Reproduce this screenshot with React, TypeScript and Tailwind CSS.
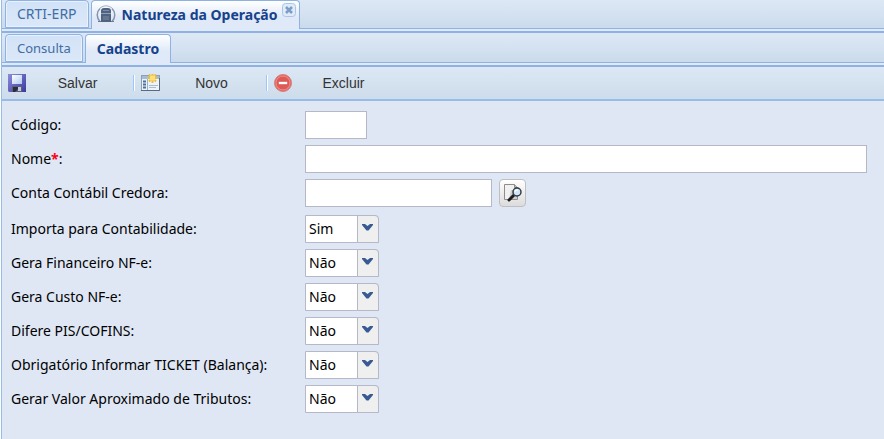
import { useState, type ReactNode } from "react";

const OPTIONS = ["Sim", "Não"];

const SELECT_FIELDS = [
    { id: "contabilidade", label: "Importa para Contabilidade:", value: "Sim" },
    { id: "financeiro", label: "Gera Financeiro NF-e:", value: "Não" },
    { id: "custo", label: "Gera Custo NF-e:", value: "Não" },
    { id: "pisCofins", label: "Difere PIS/COFINS:", value: "Não" },
    { id: "ticket", label: "Obrigatório Informar TICKET (Balança):", value: "Não" },
    { id: "tributos", label: "Gerar Valor Aproximado de Tributos:", value: "Não" },
];

const ModuleIcon = () => (
    <svg className="h-5 w-5 shrink-0" viewBox="0 0 20 20" fill="none">
        <path d="M4 16.5A9 9 0 0 1 4 3.5" stroke="#8494ac" strokeWidth="1.5" />
        <path d="M16 16.5a9 9 0 0 0 0-13" stroke="#8494ac" strokeWidth="1.5" />
        <path d="M4 3Q10-1.5 16 3" stroke="#a5b3c8" />
        <path d="M5 6Q5 3 8 3h4q3 0 3 3v11H5z" fill="#4f627f" />
        <path d="M7 5.5h6" stroke="#7c8da8" />
        <path d="M5 8.5h10" stroke="#8fa0b8" />
        <rect x="7" y="11" width="6" height="4" fill="#66768f" />
        <path d="M2 16.5h3M15 16.500h3" stroke="#6b7c97" />
    </svg>
);

const SaveIcon = () => (
    <svg className="h-[18px] w-[18px] shrink-0" viewBox="0 0 18 18">
        <defs>
            <linearGradient id="disk" x1="0" y1="0" x2="1" y2="1">
                <stop offset="0" stopColor="#8c8cdc" />
                <stop offset="1" stopColor="#3b3a9b" />
            </linearGradient>
            <linearGradient id="diskLabel" x1="0" y1="0" x2="1" y2="1">
                <stop offset="0" stopColor="#ffffff" />
                <stop offset="1" stopColor="#b0c9f2" />
            </linearGradient>
        </defs>
        <path d="M0 0h18v18H1l-1-1z" fill="url(#disk)" />
        <rect x="4" y="1" width="10" height="9" fill="url(#diskLabel)" />
        <rect x="4" y="12" width="10" height="6" fill="#5d5d7c" />
        <path d="M5 13h5v2l-3 3H5z" fill="#2a2a42" />
        <rect x="10" y="13" width="3" height="4" fill="#c3cae0" />
    </svg>
);

const NewIcon = () => (
    <svg className="h-[18px] w-5 shrink-0" viewBox="0 0 20 18">
        <rect x="0.5" y="1.5" width="18" height="15" fill="#edf3f9" stroke="#8ba0b5" />
        <path d="M18.5 4v12.5H0" fill="none" stroke="#566b80" />
        <rect x="1" y="2" width="17" height="3" fill="#a5bed8" />
        <path d="M2 7.500h3M2 10.500h3M2 13.500h3" stroke="#4d7099" strokeWidth="2" />
        <path d="M6.5 5v11" stroke="#9ab0c6" />
        <path d="M8 11.500h9M8 13.500h7" stroke="#a9bccf" />
        <path
            d="M11.5 -1v10M6.500 4h10M8 0.500l7 7M15 0.500l-7 7"
            stroke="#e8bd45"
            strokeWidth="2"
        />
        <rect x="9" y="1.500" width="5" height="5" fill="#ffe070" />
    </svg>
);

const DeleteIcon = () => (
    <svg className="h-[18px] w-[18px] shrink-0" viewBox="0 0 18 18">
        <circle cx="9" cy="9" r="8.5" fill="#e2605b" stroke="#d2817f" />
        <circle cx="9" cy="9" r="7" fill="#e05a55" stroke="#f08f89" />
        <rect x="4.5" y="7.5" width="9" height="3" rx="1" fill="#fff" stroke="#c94642" strokeWidth="0.5" />
    </svg>
);

const LookupIcon = () => (
    <svg className="h-5 w-5" viewBox="0 0 20 20" fill="none">
        <path d="M1.5 1.5h10l3 3v12h-13z" fill="#f1f1f1" stroke="#8d8d8d" />
        <path d="M11.5 1.5v3h3" fill="#bbb" stroke="#8d8d8d" />
        <path d="M8 7h6v9H6z" fill="#cfcfcf" />
        <path d="M11 12l-5 5" stroke="#1d1d1d" strokeWidth="3" strokeLinecap="round" />
        <circle cx="14" cy="9" r="4" fill="#cfe7fa" stroke="#333b42" strokeWidth="1.5" />
        <path d="M12 8.5q1-2 3-1.500" stroke="#fff" strokeWidth="1.5" />
    </svg>
);

const CloseIcon = () => (
    <svg className="h-3.5 w-3.5" viewBox="0 0 14 14">
        <rect x="0.5" y="0.5" width="13" height="13" rx="3" fill="#e0ebf8" stroke="#abc5e8" />
        <path d="M4 4l6 6M10 4l-6 6" stroke="#7a9cc7" strokeWidth="2.5" />
    </svg>
);

const TAB = "flex items-center rounded-t border border-[#8db2e3] leading-5";
const TAB_IDLE =
    "h-7 bg-linear-to-b from-[#d2e2f6] to-[#dbe8f9] px-[11px] text-[#416da3] inset-ring inset-ring-[#e8f1fc]";
const TAB_ACTIVE =
    "-mb-px h-[29px] border-b-0 bg-linear-to-b from-white to-[#dfe9f8] to-60% font-bold text-[#15428b]";

const TabStrip = ({ children }: { children: ReactNode }) => (
    <div className="border-b-2 border-[#8db2e3] bg-[#dfe9f8] pb-0.5">
        <div
            role="tablist"
            className="flex h-[29px] items-end gap-[2px] border-b border-[#8db2e3] bg-linear-to-b from-[#dde8f5] to-[#cbdbec] pl-[3px]"
        >
            {children}
        </div>
    </div>
);

type ToolButtonProps = { icon: ReactNode; label: string };

const ToolButton = ({ icon, label }: ToolButtonProps) => (
    <button
        type="button"
        className="flex h-6 w-[125px] items-center font-['Liberation_Sans',Arial,sans-serif] text-[14px] leading-5 text-[#333]"
    >
        {icon}
        <span className="flex-1 pr-1 text-center">{label}</span>
    </button>
);

const Separator = () => <span className="mr-1.5 h-4 w-0.5 border-l border-[#98c8ff] bg-white" />;

const FIELD = "h-7 min-w-0 border border-[#b5b8c8] bg-white px-[3px] outline-none focus:border-[#7eadd9]";

type RowProps = { id: string; label: ReactNode; children: ReactNode };

const Row = ({ id, label, children }: RowProps) => (
    <div className="flex items-center">
        <label htmlFor={id} className="w-[294px] shrink-0">
            {label}
        </label>
        {children}
    </div>
);

export default function App() {
    const [values, setValues] = useState<Record<string, string>>(
        Object.fromEntries(SELECT_FIELDS.map((f) => [f.id, f.value]))
    );

    return (
        <div className="ml-px min-h-screen border-l border-[#99bbe8] bg-[#dfe7f5] font-['Noto_Sans',Tahoma,sans-serif] text-[14px] leading-5 text-black">
            <TabStrip>
                <button type="button" role="tab" aria-selected={false} className={`${TAB} ${TAB_IDLE}`}>
                    CRTI-ERP
                </button>
                <div className={`${TAB} ${TAB_ACTIVE} pr-[3px] pl-1`}>
                    <button type="button" role="tab" aria-selected className="flex items-center gap-1.5">
                        <ModuleIcon />
                        Natureza da Operação
                    </button>
                    <button type="button" aria-label="Fechar" className="mt-0.5 ml-1 self-start">
                        <CloseIcon />
                    </button>
                </div>
            </TabStrip>

            <div className="pt-px">
                <TabStrip>
                    <button
                        type="button"
                        role="tab"
                        aria-selected={false}
                        className={`${TAB} ${TAB_IDLE} text-[13px]`}
                    >
                        Consulta
                    </button>
                    <button
                        type="button"
                        role="tab"
                        aria-selected
                        className={`${TAB} ${TAB_ACTIVE} px-[11px]`}
                    >
                        Cadastro
                    </button>
                </TabStrip>
            </div>

            <div
                role="toolbar"
                className="flex h-[34px] items-center border-b-2 border-[#99bbe8] bg-linear-to-b from-[#dce8f4] to-[#cddceb] pl-1.5"
            >
                <ToolButton icon={<SaveIcon />} label="Salvar" />
                <Separator />
                <ToolButton icon={<NewIcon />} label="Novo" />
                <Separator />
                <ToolButton icon={<DeleteIcon />} label="Excluir" />
            </div>

            <form className="flex flex-col gap-2 pt-2.5 pr-[17px] pl-[9px]" onSubmit={(e) => e.preventDefault()}>
                <div className="flex flex-col gap-1.5">
                    <Row id="codigo" label="Código:">
                        <input id="codigo" type="text" className={`${FIELD} w-[62px]`} />
                    </Row>
                    <Row
                        id="nome"
                        label={
                            <>
                                Nome<span className="font-bold text-[#ff0018]">*</span>:
                            </>
                        }
                    >
                        <input id="nome" type="text" required className={`${FIELD} flex-1`} />
                    </Row>
                    <Row id="conta" label="Conta Contábil Credora:">
                        <input id="conta" type="text" className={`${FIELD} w-[187px]`} />
                        <button
                            type="button"
                            aria-label="Pesquisar conta"
                            className="ml-[7px] flex h-7 w-[27px] items-center justify-center rounded border border-[#bfbfbf] bg-linear-to-b from-white to-[#dcdcdc]"
                        >
                            <LookupIcon />
                        </button>
                    </Row>
                </div>

                <div className="flex flex-col gap-1.5">
                    {SELECT_FIELDS.map((field) => (
                        <Row key={field.id} id={field.id} label={field.label}>
                            <div className="relative w-[74px]">
                                <select
                                    id={field.id}
                                    value={values[field.id]}
                                    onChange={(e) => setValues({ ...values, [field.id]: e.target.value })}
                                    className={`${FIELD} block w-full appearance-none rounded-tr-sm`}
                                >
                                    {OPTIONS.map((option) => (
                                        <option key={option}>{option}</option>
                                    ))}
                                </select>
                                <span className="pointer-events-none absolute inset-y-0 right-0 flex w-[22px] justify-center rounded-tr-sm border border-[#b5b8c8] bg-[#efefef] pt-2 pr-0.5">
                                    <svg className="h-[7px] w-[11px]" viewBox="0 0 11 7">
                                        <path d="M0 0h3l2.5 2L8 0h3v1L6.5 6.5h-2L0 1z" fill="#385a93" />
                                    </svg>
                                </span>
                            </div>
                        </Row>
                    ))}
                </div>
            </form>
        </div>
    );
}
